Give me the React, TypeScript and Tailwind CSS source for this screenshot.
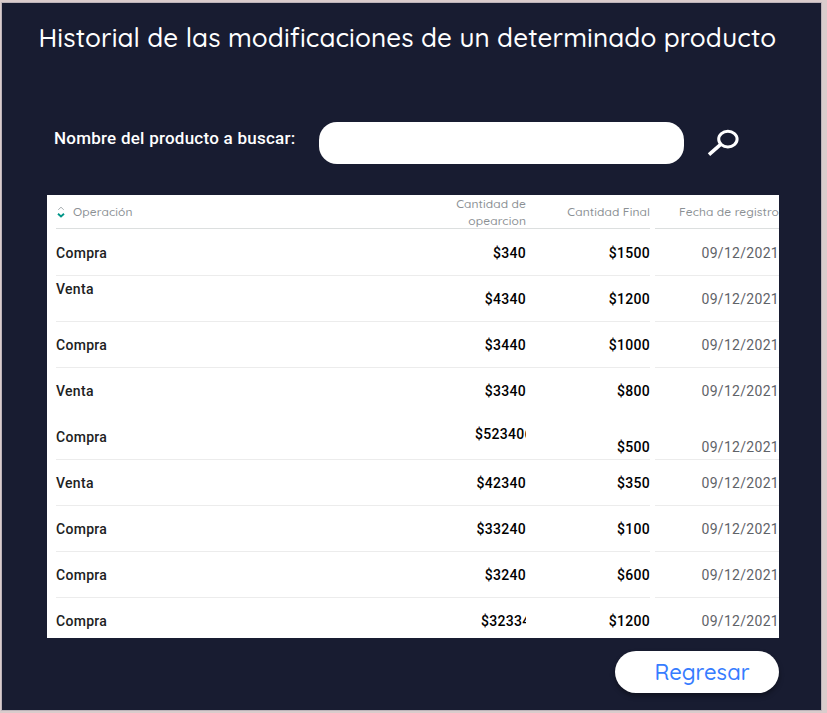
type Row = {
  op: string;
  amount: string;
  total: string;
  opClass?: string;
  amountClass?: string;
  endClass?: string;
  line?: boolean;
};

const rows: Row[] = [
  { op: 'Compra', amount: '$340', total: '$1500' },
  { op: 'Venta', amount: '$4340', total: '$1200', opClass: 'pb-[18px]' },
  { op: 'Compra', amount: '$3440', total: '$1000' },
  { op: 'Venta', amount: '$3340', total: '$800', line: false },
  { op: 'Compra', amount: '$523406', total: '$500', amountClass: 'pl-[73px] pb-1 justify-start', endClass: 'pt-[22px]' },
  { op: 'Venta', amount: '$42340', total: '$350' },
  { op: 'Compra', amount: '$33240', total: '$100' },
  { op: 'Compra', amount: '$3240', total: '$600' },
  { op: 'Compra', amount: '$32334', total: '$1200', amountClass: 'pl-[79px] pt-px justify-start', line: false },
];

const quick = "font-['Quicksand','Lato',sans-serif] font-medium";

function SortIcon() {
  return (
    <svg width="8" height="12" viewBox="0 0 8 12" fill="none" className="shrink-0">
      <path d="M1.2 3.8 4 1.2l2.8 2.6" stroke="#a9b0b3" strokeWidth="1" />
      <path d="M1 7.8 4 10.4l3-2.6" stroke="#009688" strokeWidth="1.9" />
    </svg>
  );
}

function SearchIcon() {
  return (
    <svg width="32" height="30" viewBox="0 0 32 30" fill="none" stroke="#fff">
      <ellipse cx="20.9" cy="11.1" rx="9.2" ry="7.8" strokeWidth="3" />
      <path d="M14 16.2 2 26.6" strokeWidth="3.6" />
    </svg>
  );
}

function TableRow({ row }: { row: Row }) {
  const border = row.line === false ? 'border-transparent' : 'border-[#ececec]';
  return (
    <div className="flex h-[46px] shrink-0 text-[14px] tracking-[0.3px] font-medium text-black">
      <div className={`flex w-[346px] items-center border-b text-[#202122] ${border} ${row.opClass ?? 'pt-px'}`}>{row.op}</div>
      <div className={`flex w-[124px] items-center overflow-hidden border-b ${border} ${row.amountClass ?? 'justify-end pt-px'}`}>{row.amount}</div>
      <div className={`flex w-[124px] items-center justify-end border-b ${border} ${row.endClass ?? 'pt-px'}`}>{row.total}</div>
      <div className={`ml-[5px] flex w-[124px] items-center justify-end border-b font-normal text-[#5f6368] ${border} ${row.endClass ?? 'pt-px'}`}>09/12/2021</div>
    </div>
  );
}

export default function App() {
  return (
    <div className="h-[713px] w-[827px] overflow-hidden bg-[#dacccc] pt-[3px] pl-[2px] font-['Roboto',sans-serif]">
      <main className="flex h-[707px] w-[819px] flex-col bg-[#181c31] outline outline-1 outline-[#a9a1ab]/60">
        <h1 className={`ml-[36.5px] mt-[15px] h-10 whitespace-nowrap text-[26px] leading-10 tracking-[0.12px] text-white ${quick}`}>
          Historial de las modificaciones de un determinado producto
        </h1>
        <div className="mt-16 flex h-[42px] shrink-0 pl-[52px]">
          <label htmlFor="producto" className="w-[265px] whitespace-nowrap pt-px text-[17px] font-medium leading-[30px] tracking-[0.24px] text-white">
            Nombre del producto a buscar:
          </label>
          <input id="producto" className="h-[42px] w-[365px] rounded-[18px] bg-white px-4 text-black outline-none" />
          <button aria-label="Buscar" className="ml-[23px] mt-[6px] h-[30px]">
            <SearchIcon />
          </button>
        </div>
        <section className="ml-[45px] mt-[31px] flex h-[443px] w-[732px] shrink-0 flex-col overflow-hidden bg-white pl-[9px]">
          <div className={`mb-px flex h-[34px] shrink-0 text-[12px] tracking-[0.1px] text-[#8b9094] ${quick}`}>
            <div className="flex w-[346px] items-center gap-2 border-b border-[#dcdfdf] pl-px">
              <SortIcon />
              <span>Operación</span>
            </div>
            <div className="w-[124px] border-b border-[#dcdfdf] text-right leading-[17px]">
              Cantidad de
              <br />
              opearcion
            </div>
            <div className="flex w-[124px] items-center justify-end border-b border-[#dcdfdf]">Cantidad Final</div>
            <div className="ml-[5px] flex w-[124px] items-center justify-end border-b border-[#dcdfdf]">Fecha de registro</div>
          </div>
          {rows.map((row, i) => (
            <TableRow key={i} row={row} />
          ))}
        </section>
        <button className={`ml-[613px] mt-[13px] h-[42px] w-[164px] shrink-0 rounded-full bg-white pl-[10px] text-[22px] text-[#367cff] shadow-[0_3px_5px_rgba(0,0,0,0.35)] ${quick}`}>
          Regresar
        </button>
      </main>
    </div>
  );
}
